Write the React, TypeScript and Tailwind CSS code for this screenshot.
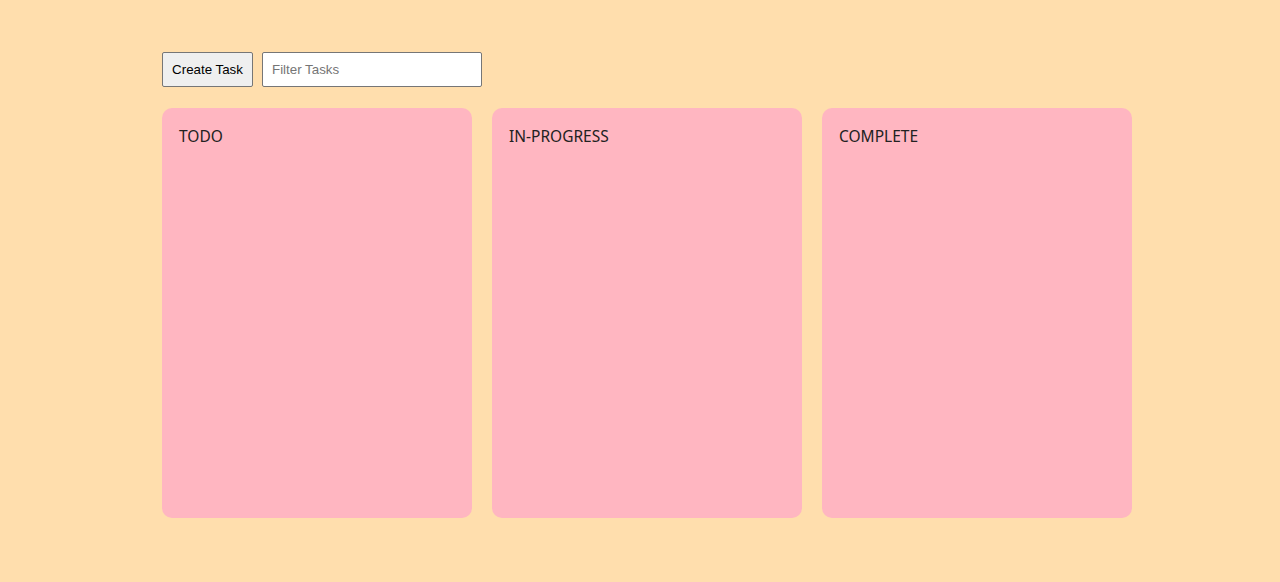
import React, { useState } from "react";

const columns = ["TODO", "IN-PROGRESS", "COMPLETE"];

const App = () => {
  const [filter, setFilter] = useState("");

  return (
    <div className="min-h-[582px] w-full bg-[#ffdead] pl-[162px] pt-[52px]">
      {/* TOOLBAR */}
      <div className="flex gap-[9px]">
        <button className="h-[35px] w-[91px] rounded-[2px] border border-[#767676] bg-[#efefef] text-[13.33px] text-black [font-family:'Liberation_Sans',Arial,sans-serif]">
          Create Task
        </button>
        <input
          value={filter}
          onChange={(e) => setFilter(e.target.value)}
          placeholder="Filter Tasks"
          className="h-[35px] w-[220px] rounded-[2px] border border-[#767676] bg-white px-[9px] text-[13.33px] text-black placeholder:text-[#757575] outline-none [font-family:'Liberation_Sans',Arial,sans-serif]"
        />
      </div>

      {/* COLUMNS */}
      <div className="mt-[21px] flex gap-5">
        {columns.map((col) => (
          <div
            key={col}
            className="h-[410px] w-[310px] rounded-[10px] bg-[#ffb6c1] px-[17px] pt-[16px]"
          >
            <h3 className="text-[15.5px] leading-6 text-[#222] [font-family:'Noto_Sans',sans-serif]">
              {col}
            </h3>
          </div>
        ))}
      </div>
    </div>
  );
};

export default App;
